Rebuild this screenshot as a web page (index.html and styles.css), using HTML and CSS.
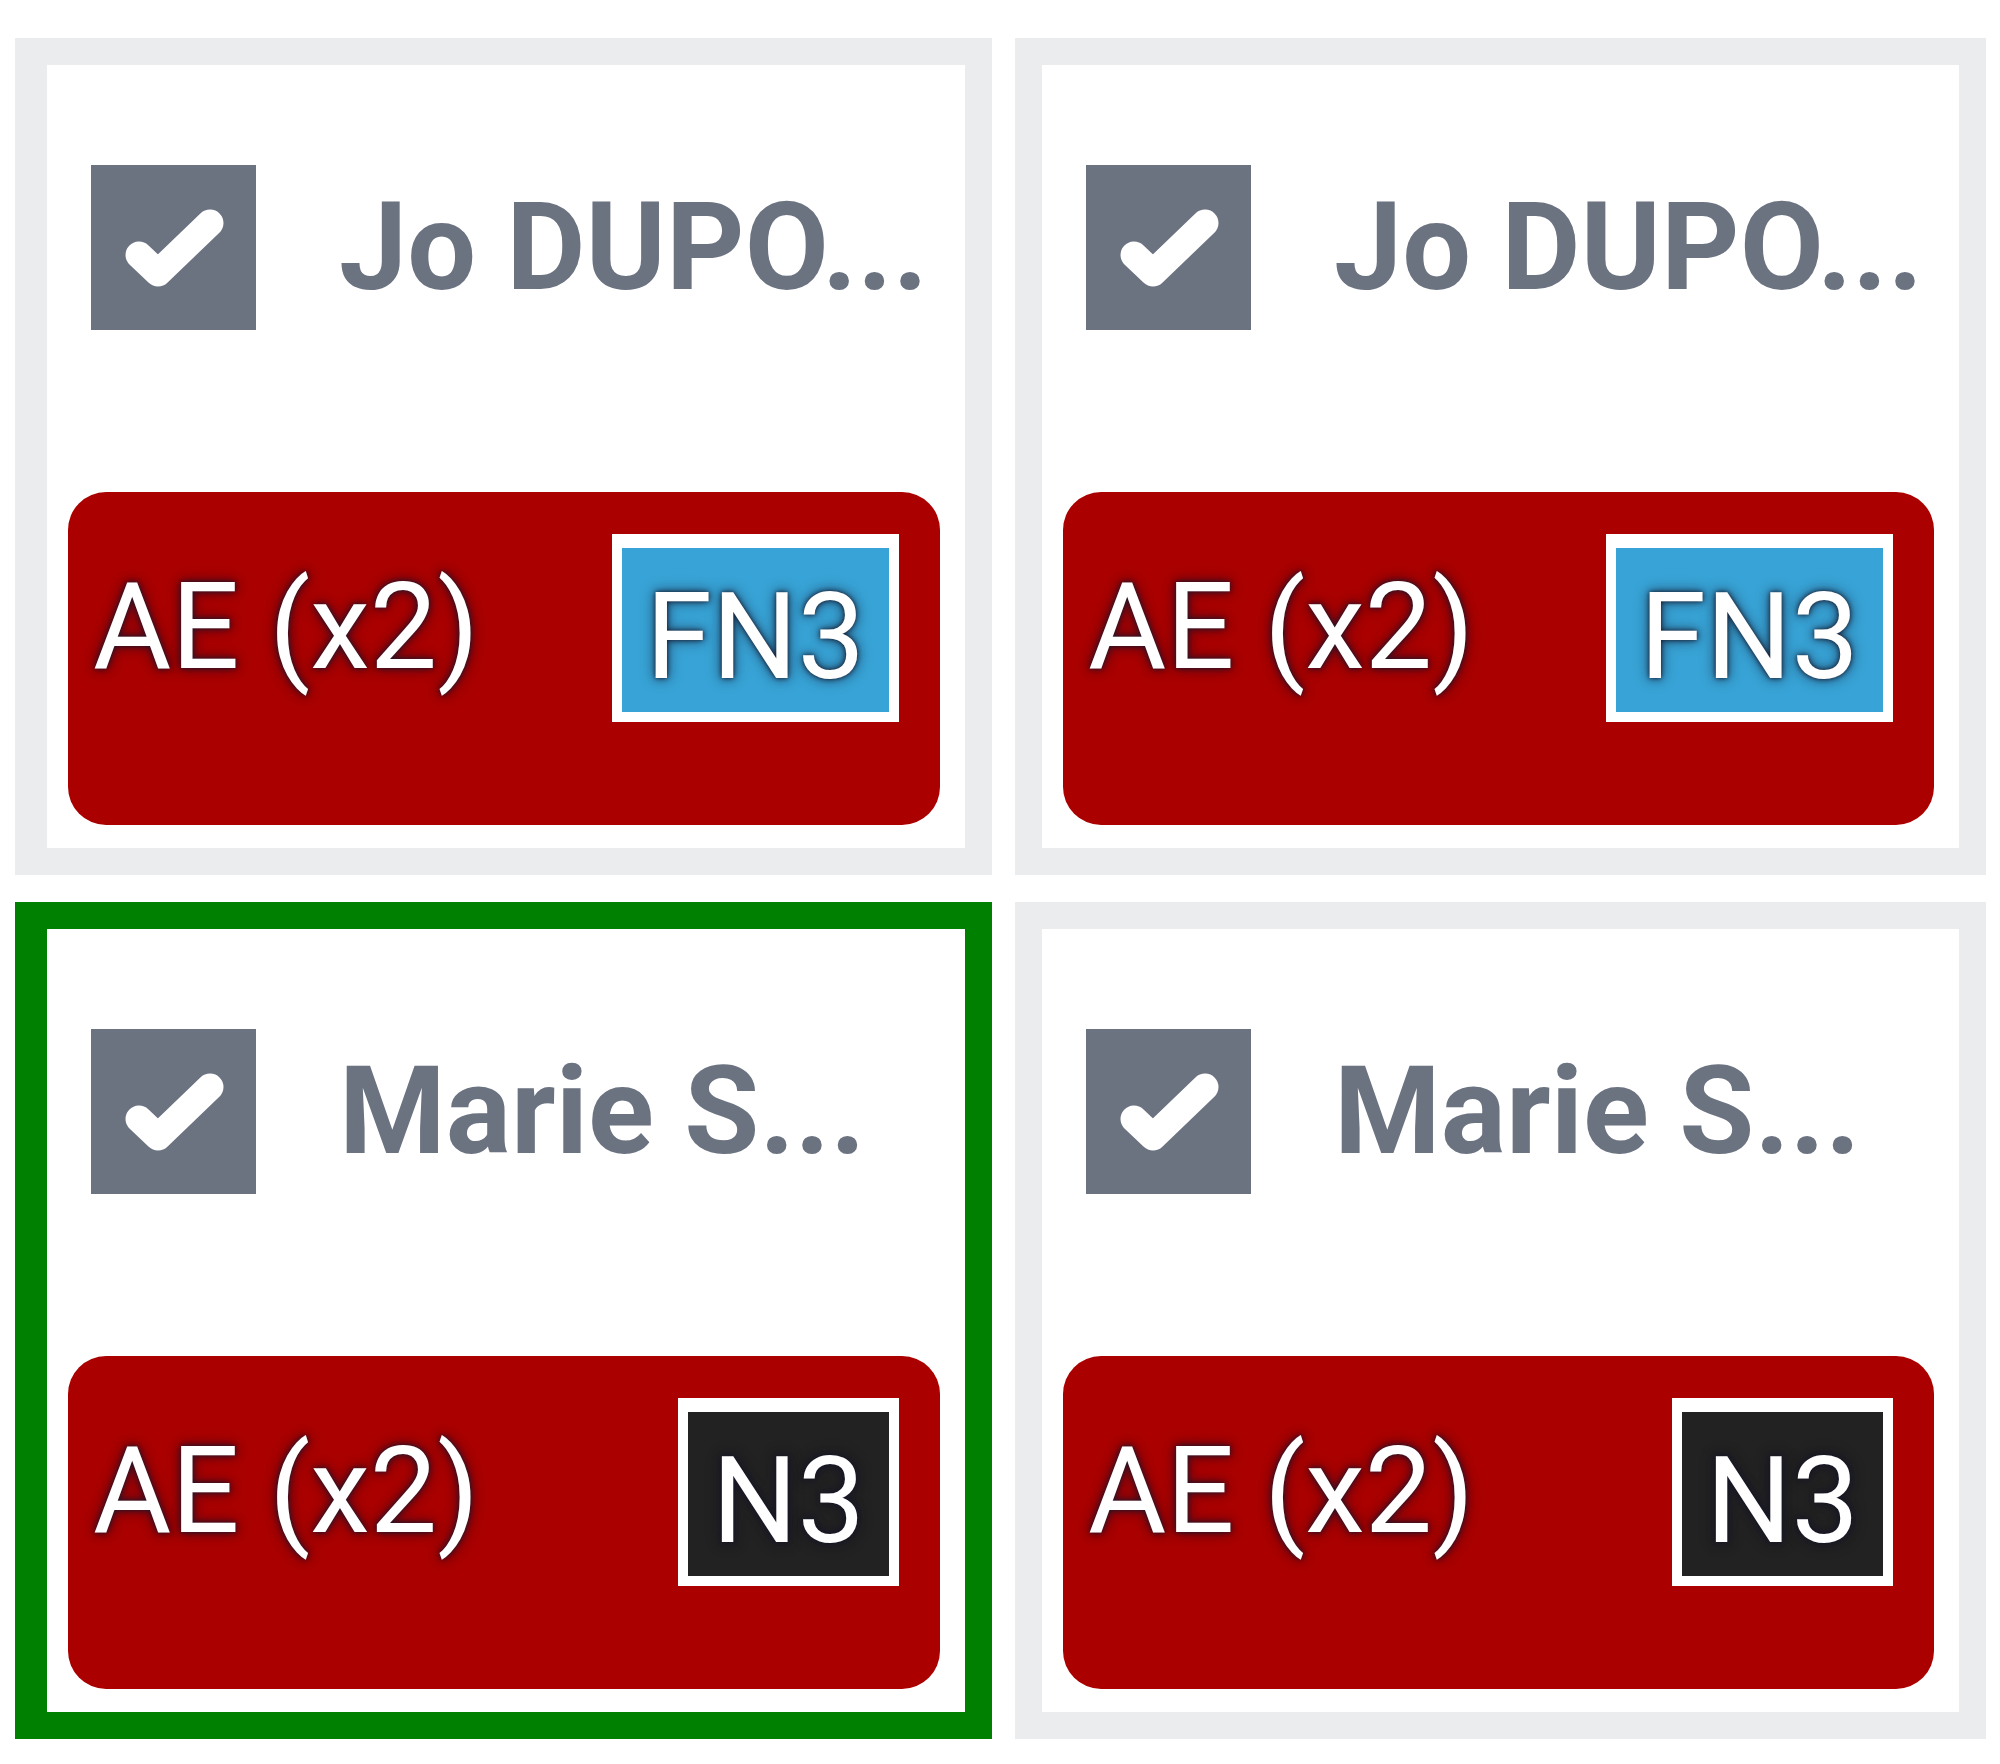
FILE: index.html
```html
<!DOCTYPE html>
<html lang="fr">
<head>
<meta charset="utf-8">
<title>Cartes</title>
<link rel="stylesheet" href="styles.css">
</head>
<body>
<div class="board">
  <div class="card">
    <div class="card-head">
      <span class="check"><svg viewBox="0 0 165 165" width="165" height="165"><polyline points="48,90 67,108 119,58" fill="none" stroke="#fff" stroke-width="27" stroke-linecap="round" stroke-linejoin="round"/></svg></span>
      <span class="name">Jo DUPO...</span>
    </div>
    <div class="bar">
      <div class="bar-row">
        <span class="bar-label">AE (x2)</span>
        <span class="badge badge-blue">FN3</span>
      </div>
    </div>
  </div>
  <div class="card">
    <div class="card-head">
      <span class="check"><svg viewBox="0 0 165 165" width="165" height="165"><polyline points="48,90 67,108 119,58" fill="none" stroke="#fff" stroke-width="27" stroke-linecap="round" stroke-linejoin="round"/></svg></span>
      <span class="name">Jo DUPO...</span>
    </div>
    <div class="bar">
      <div class="bar-row">
        <span class="bar-label">AE (x2)</span>
        <span class="badge badge-blue">FN3</span>
      </div>
    </div>
  </div>
  <div class="card card-selected">
    <div class="card-head">
      <span class="check"><svg viewBox="0 0 165 165" width="165" height="165"><polyline points="48,90 67,108 119,58" fill="none" stroke="#fff" stroke-width="27" stroke-linecap="round" stroke-linejoin="round"/></svg></span>
      <span class="name">Marie S...</span>
    </div>
    <div class="bar">
      <div class="bar-row">
        <span class="bar-label">AE (x2)</span>
        <span class="badge badge-dark">N3</span>
      </div>
    </div>
  </div>
  <div class="card">
    <div class="card-head">
      <span class="check"><svg viewBox="0 0 165 165" width="165" height="165"><polyline points="48,90 67,108 119,58" fill="none" stroke="#fff" stroke-width="27" stroke-linecap="round" stroke-linejoin="round"/></svg></span>
      <span class="name">Marie S...</span>
    </div>
    <div class="bar">
      <div class="bar-row">
        <span class="bar-label">AE (x2)</span>
        <span class="badge badge-dark">N3</span>
      </div>
    </div>
  </div>
</div>
</body>
</html>
```

FILE: styles.css
```css
html, body {
  margin: 0;
  padding: 0;
  background: #ffffff;
}

body {
  font-family: Roboto, "Liberation Sans", Arial, sans-serif;
}

.board {
  display: grid;
  grid-template-columns: 977px 971px;
  column-gap: 23px;
  row-gap: 27px;
  padding: 38px 0 0 15px;
}

.card {
  box-sizing: border-box;
  border: 27px solid #ebecee;
  background: #ffffff;
  display: flex;
  flex-direction: column;
}

.card:nth-child(odd) {
  border-left-width: 32px;
}

.card-selected {
  border-color: #008000;
}

.card-head {
  display: flex;
  align-items: center;
  padding: 100px 0 0 44px;
  height: 165px;
}

.check {
  flex: 0 0 auto;
  width: 165px;
  height: 165px;
  background: #6b7280;
  display: block;
}

.check svg {
  display: block;
}

.name {
  margin-left: 83px;
  font-size: 122px;
  font-weight: 700;
  color: #6b7280;
  white-space: nowrap;
  line-height: 165px;
}

.bar {
  box-sizing: border-box;
  margin: 162px 25px 23px 21px;
  height: 333px;
  border-radius: 38px;
  background: #aa0000;
  padding: 41px 41px 0 25px;
}

.bar-row {
  display: flex;
  justify-content: space-between;
  align-items: center;
}

.bar-label {
  font-size: 120px;
  font-weight: 400;
  line-height: 189px;
  color: #ffffff;
  white-space: nowrap;
  text-shadow: 0 0 4px rgba(30, 20, 40, 0.9), 0 0 10px rgba(30, 20, 40, 0.75), 0 0 16px rgba(30, 20, 40, 0.4);
}

.badge {
  box-sizing: border-box;
  border-style: solid;
  border-color: #ffffff;
  border-width: 14px 10px 10px 10px;
  padding: 14px 24px 0 24px;
  font-size: 120px;
  font-weight: 400;
  line-height: 150px;
  color: #ffffff;
  white-space: nowrap;
  text-shadow: 0 0 4px rgba(20, 20, 40, 0.85), 0 0 10px rgba(20, 20, 40, 0.65), 0 0 16px rgba(20, 20, 40, 0.35);
}

.badge-blue {
  background: #38a3d6;
}

.badge-dark {
  background: #222222;
}
```
